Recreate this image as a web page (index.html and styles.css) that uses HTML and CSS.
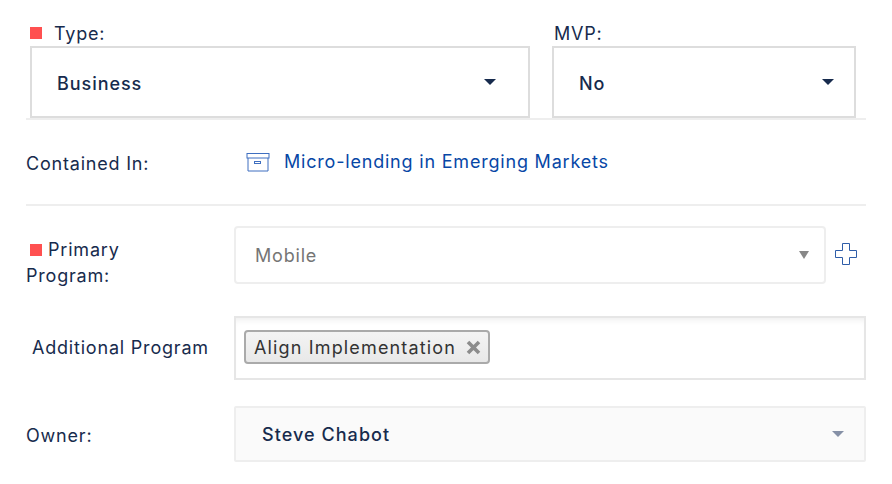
FILE: index.html
```html
<!DOCTYPE html>
<html lang="en">
<head>
  <meta charset="UTF-8" />
  <title>Edit Feature</title>
  <link rel="stylesheet" href="styles.css">
</head>
<body>
  <div class="form">
    <section class="top-row">
      <div class="top-field type-field">
        <div class="top-label"><span class="req"></span>Type:</div>
        <div class="plain-select">
          <span>Business</span>
          <span class="caret"></span>
        </div>
      </div>
      <div class="top-field mvp-field">
        <div class="top-label">MVP:</div>
        <div class="plain-select">
          <span>No</span>
          <span class="caret"></span>
        </div>
      </div>
    </section>

    <section class="contained-row">
      <div class="row-label">Contained In:</div>
      <a class="contained-link" href="#">
        <svg class="box-icon" width="24" height="20" viewBox="0 0 24 20" fill="none" stroke="#3f6fc0" stroke-width="1">
          <rect x="1" y="1.5" width="22" height="4.5"></rect>
          <path d="M2 6v13h20v-13"></path>
          <rect x="8.5" y="9.5" width="6" height="2"></rect>
        </svg>
        Micro-lending in Emerging Markets
      </a>
    </section>

    <section class="row primary-row">
      <div class="row-label primary-label"><span class="req small-gap"></span>Primary<br>Program:</div>
      <div class="program-select">
        <span>Mobile</span>
        <span class="caret grey"></span>
      </div>
      <svg class="plus-icon" width="24" height="24" viewBox="0 0 24 24" fill="#fff" stroke="#2f5da8" stroke-width="1">
        <path d="M8.5 1.5h7v7h7v7h-7v7h-7v-7h-7v-7h7z"></path>
      </svg>
    </section>

    <section class="row additional-row">
      <div class="row-label additional-label">Additional Program</div>
      <div class="tags-input">
        <span class="tag">Align Implementation
          <svg class="tag-x" width="15" height="15" viewBox="0 0 15 15" stroke="#8c8c8c" stroke-width="3.6">
            <path d="M2 2l11 11M13 2L2 13"></path>
          </svg>
        </span>
      </div>
    </section>

    <section class="row owner-row">
      <div class="row-label owner-label">Owner:</div>
      <div class="owner-select">
        <span>Steve Chabot</span>
        <span class="caret slate"></span>
      </div>
    </section>
  </div>
</body>
</html>
```

FILE: styles.css
```css
body {
  margin: 0;
  background: #fff;
  font-family: Inter, 'Noto Sans', sans-serif;
  font-size: 18px;
  color: #172b4d;
  letter-spacing: 0.8px;
}

.form {
  width: 840px;
  margin-left: 26px;
  padding-top: 22px;
}

.top-row {
  display: flex;
  padding-left: 4px;
  height: 96px;
  border-bottom: 2px solid #eee;
}

.top-field {
  display: flex;
  flex-direction: column;
}

.type-field {
  width: 500px;
  margin-right: 22px;
}

.mvp-field {
  width: 304px;
}

.top-label {
  display: flex;
  align-items: center;
  height: 22px;
  margin-bottom: 2px;
}

.mvp-field .top-label {
  margin-left: 2px;
}

.req {
  width: 12px;
  height: 12px;
  background: #ff5050;
  margin-right: 12px;
}

.req.small-gap {
  display: inline-block;
  margin: 0 6px 0 4px;
}

.plain-select {
  display: flex;
  justify-content: space-between;
  align-items: center;
  box-sizing: border-box;
  height: 72px;
  padding: 2px 32px 0 25px;
  border: 2px solid #ddd;
  font-weight: 500;
  letter-spacing: 0.95px;
}

.mvp-field .plain-select {
  padding-right: 20px;
}

.caret {
  width: 0;
  height: 0;
  border-left: 6px solid transparent;
  border-right: 6px solid transparent;
  border-top: 6px solid #172b4d;
  margin-bottom: 2px;
}

.caret.grey {
  border-left-width: 5px;
  border-right-width: 5px;
  border-top: 8px solid #888;
  margin: 0;
}

.caret.slate {
  border-left-width: 6px;
  border-right-width: 6px;
  border-top: 6px solid #8590a6;
  margin: 0;
}

.contained-row {
  display: flex;
  height: 84px;
  border-bottom: 2px solid #eee;
}

.row-label {
  width: 208px;
  flex-shrink: 0;
  line-height: 26px;
}

.contained-row .row-label {
  padding-top: 31px;
}

.contained-link {
  display: flex;
  align-items: center;
  align-self: flex-start;
  margin: 31px 0 0 12px;
  color: #0747a6;
  text-decoration: none;
}

.box-icon {
  margin-right: 14px;
}

.row {
  display: flex;
}

.primary-row {
  margin-top: 20px;
  height: 58px;
}

.primary-label {
  padding-top: 11px;
}

.program-select {
  display: flex;
  justify-content: space-between;
  align-items: center;
  box-sizing: border-box;
  width: 592px;
  height: 58px;
  padding: 0 15px 0 19px;
  border: 2px solid #eee;
  border-radius: 4px;
  color: #757575;
}

.plus-icon {
  margin: 16px 0 0 8px;
}

.additional-row {
  margin-top: 32px;
  height: 64px;
  align-items: center;
}

.additional-label {
  padding-left: 6px;
  width: 202px;
}

.tags-input {
  flex: 1;
  box-sizing: border-box;
  height: 64px;
  padding: 12px 8px;
  border: 2px solid #e6e6e6;
  box-shadow: inset 0 6px 6px -4px #eee;
}

.tag {
  display: inline-flex;
  align-items: center;
  justify-content: space-between;
  box-sizing: border-box;
  width: 246px;
  height: 34px;
  padding: 0 7px 0 8px;
  background: linear-gradient(#f4f4f4, #e8e8e8);
  border: 2px solid #aaa;
  border-radius: 4px;
  color: #333;
  letter-spacing: 1.15px;
  white-space: nowrap;
}

.owner-row {
  margin-top: 26px;
  height: 56px;
}

.owner-label {
  padding-top: 17px;
}

.owner-select {
  flex: 1;
  display: flex;
  justify-content: space-between;
  align-items: center;
  box-sizing: border-box;
  height: 56px;
  padding: 0 20px 0 26px;
  background: #fafafa;
  border: 2px solid #eee;
  border-radius: 2px;
  font-weight: 500;
  letter-spacing: 1.05px;
}
```
